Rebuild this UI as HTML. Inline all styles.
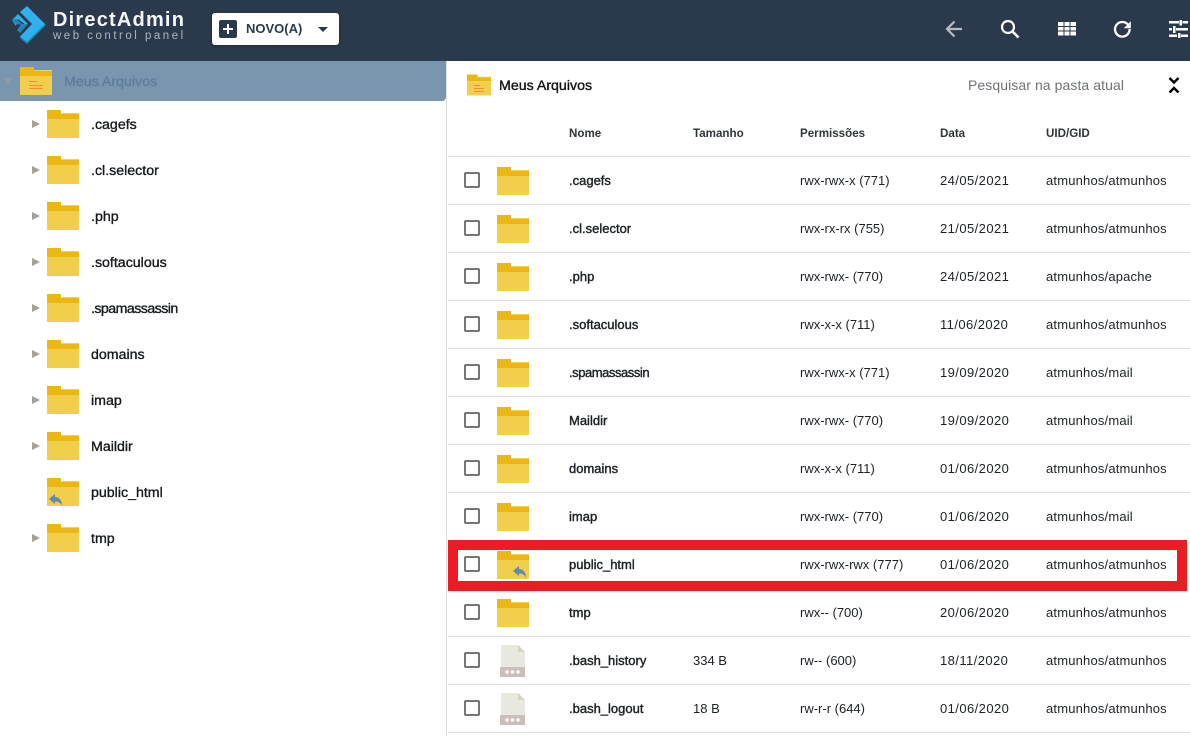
<!DOCTYPE html>
<html><head><meta charset="utf-8"><style>
html,body{margin:0;padding:0;background:#fff}
#p{position:relative;width:1190px;height:736px;overflow:hidden;font-family:"Liberation Sans",sans-serif;color:#1d2126;background:#fff}
#p div,#p svg,#p span{position:absolute}
.t{font-size:13px;line-height:16px;white-space:nowrap;margin-top:1px}
.dt{letter-spacing:.42px}
.u{letter-spacing:.18px}
.h{font-size:11.600px;line-height:16px;white-space:nowrap;font-weight:bold;color:#30353b;margin-top:.5px}
.n{font-size:13px;line-height:16px;white-space:nowrap;color:#1d2126;-webkit-text-stroke:.4px currentColor;margin-top:1px}
.tr{font-size:14.200px;line-height:16px;white-space:nowrap;color:#15181c;-webkit-text-stroke:.35px currentColor;margin-top:2px}
.ln{left:448px;width:742px;height:1px;background:#e0e0e0}
.cb{left:464px;width:12px;height:12px;border:2px solid #757575;border-radius:2px}
.ar{left:32px;width:0;height:0;border-left:8px solid #a8a09a;border-top:4.500px solid transparent;border-bottom:4.500px solid transparent;margin-top:1px}
.o{height:1.400px;background:#f0913a}
</style></head><body><div id="p">
<svg width="0" height="0" style="left:0;top:0"><defs>
<symbol id="f" viewBox="0 0 32 28"><path d="M0 0h14v4h18v5H0z" fill="#ecb613"/><path d="M14 3h18v1H14z" fill="#f3d15f"/><path d="M0 9h32v19H0z" fill="#f1cf4d"/></symbol>
<symbol id="r" viewBox="0 0 14 12"><path d="M6 0L0 5l6 5V7.500c3.500 0 5.500 1 7 4.500C13 6 10 3.200 6 3z" fill="#6488a8"/></symbol>
<symbol id="d" viewBox="0 0 26 34"><path d="M1 0h17l7 7v15H1z" fill="#e8e8df"/><path d="M18 0l7 7h-7z" fill="#d3d3c8"/><path d="M0 22h25v10H0z" fill="#c9c0bb"/><circle cx="7" cy="27" r="1.700" fill="#fff"/><circle cx="12.500" cy="27" r="1.700" fill="#fff"/><circle cx="18" cy="27" r="1.700" fill="#fff"/></symbol>
</defs></svg>

<div style="left:0;top:0;width:1190px;height:61px;background:#2a3a4c"></div>
<svg style="left:0;top:0" width="50" height="50" viewBox="0 0 50 50"><path d="M12 20l6-6 10 10-3.500 0-6.500-5-2 7z" fill="#2fb2ec"/><path d="M12 20l3.500 3.500 2.500 1h3l-4 5.500 3 3 8-9H22l-6-5.500z" fill="#1f86bd"/><path d="M27 6l18 18-18 18-7-5.500 12-12.500-12-12z" fill="#2fb2ec"/><path d="M20 36.500l7 5.500 18-18 1 1-19 19-7-6z" fill="#1f86bd"/></svg>
<div style="left:53px;top:8px;font-size:20px;line-height:24px;font-weight:bold;color:#f4f6f8;white-space:nowrap;letter-spacing:1.200px">DirectAdmin</div>
<div style="left:53px;top:29px;font-size:11.500px;line-height:14px;color:#aeb6be;white-space:nowrap;letter-spacing:2.500px">web control panel</div>
<div style="left:212px;top:13px;width:127px;height:32px;background:#fff;border-radius:3px;box-shadow:0 1px 3px rgba(0,0,0,.3)"></div>
<div style="left:219px;top:20px;width:18px;height:18px;background:#2a3a4c;border-radius:2px"></div>
<div style="left:223px;top:28px;width:10px;height:2px;background:#fff"></div>
<div style="left:227px;top:24px;width:2px;height:10px;background:#fff"></div>
<div style="left:246px;top:21px;font-size:13px;line-height:16px;font-weight:bold;color:#2a3a4c;white-space:nowrap">NOVO(A)</div>
<div style="left:318px;top:27px;border-top:5px solid #2a3a4c;border-left:5px solid transparent;border-right:5px solid transparent"></div>

<svg style="left:942px;top:17px" width="24" height="24" viewBox="0 0 24 24" fill="none" stroke="#b5bbc1" stroke-width="2.200"><path d="M20 12H6M12.500 4.500L5 12l7.500 7.500"/></svg>
<svg style="left:998px;top:17px" width="24" height="24" viewBox="0 0 24 24" fill="none" stroke="#fff" stroke-width="2.200"><circle cx="10" cy="10" r="6"/><path d="M14.500 14.500l6 6" stroke-width="2.600"/></svg>
<svg style="left:1058px;top:22px" width="18" height="14" viewBox="0 0 18 14" fill="#fff"><path d="M0 0h5.500v4H0zM6.500 0h5v4h-5zM12.500 0H18v4h-5.500zM0 5h5.500v3.500H0zM6.500 5h5v3.500h-5zM12.500 5H18v3.500h-5.500zM0 9.500h5.500V13.500H0zM6.500 9.500h5V13.500h-5zM12.500 9.500H18V13.500h-5.500z"/></svg>
<svg style="left:1110px;top:17px" width="24" height="24" viewBox="0 0 24 24" fill="none"><path d="M17.800 7.500A7.300 7.300 0 1 0 19.600 12" stroke="#fff" stroke-width="2.300"/><path d="M20.800 4.200v7h-7z" fill="#fff"/></svg>
<svg style="left:1168px;top:20px" width="22" height="20" viewBox="0 0 22 20" fill="#fff"><path d="M1 1h10v2.500H1zM14.500 1H20v2.500h-5.500zM11.500 0H14v5.500h-2.500zM1 8h3v2.500H1zM8 8h12v2.500H8zM5 6h2.500v7H5zM1 14.500h8V17H1zM13 14.500h7V17h-7zM10 13h2.500v5H10z"/></svg>

<div style="left:446px;top:61px;width:1px;height:675px;background:#e0e0e0"></div>
<div style="left:0;top:61px;width:446px;height:40px;background:#7a96ae;border-radius:0 0 4px 0"></div>
<div style="left:4px;top:78px;border-top:7px solid #8d9aa5;border-left:4.500px solid transparent;border-right:4.500px solid transparent"></div>
<svg style="left:20px;top:67px" width="32" height="28"><use href="#f"/></svg>
<div class="o" style="left:29px;top:81px;width:9px"></div><div class="o" style="left:29px;top:84.500px;width:14px"></div><div class="o" style="left:29px;top:88px;width:14px"></div>
<div class="tr" style="left:64px;top:72px;color:#5c7d9c">Meus Arquivos</div>

<div class="ar" style="top:119px"></div><svg style="left:47px;top:110px" width="32" height="28"><use href="#f"/></svg><div class="tr" style="left:91px;top:115px">.cagefs</div>
<div class="ar" style="top:165px"></div><svg style="left:47px;top:156px" width="32" height="28"><use href="#f"/></svg><div class="tr" style="left:91px;top:161px">.cl.selector</div>
<div class="ar" style="top:211px"></div><svg style="left:47px;top:202px" width="32" height="28"><use href="#f"/></svg><div class="tr" style="left:91px;top:207px">.php</div>
<div class="ar" style="top:257px"></div><svg style="left:47px;top:248px" width="32" height="28"><use href="#f"/></svg><div class="tr" style="left:91px;top:253px">.softaculous</div>
<div class="ar" style="top:303px"></div><svg style="left:47px;top:294px" width="32" height="28"><use href="#f"/></svg><div class="tr" style="left:91px;top:299px;letter-spacing:-.55px">.spamassassin</div>
<div class="ar" style="top:349px"></div><svg style="left:47px;top:340px" width="32" height="28"><use href="#f"/></svg><div class="tr" style="left:91px;top:345px">domains</div>
<div class="ar" style="top:395px"></div><svg style="left:47px;top:386px" width="32" height="28"><use href="#f"/></svg><div class="tr" style="left:91px;top:391px">imap</div>
<div class="ar" style="top:441px"></div><svg style="left:47px;top:432px" width="32" height="28"><use href="#f"/></svg><div class="tr" style="left:91px;top:437px">Maildir</div>
<svg style="left:47px;top:478px" width="32" height="28"><use href="#f"/></svg><svg style="left:49px;top:494px" width="14" height="12"><use href="#r"/></svg><div class="tr" style="left:91px;top:483px">public_html</div>
<div class="ar" style="top:533px"></div><svg style="left:47px;top:524px" width="32" height="28"><use href="#f"/></svg><div class="tr" style="left:91px;top:529px">tmp</div>

<svg style="left:467px;top:74px" width="24" height="22" viewBox="0 0 32 28"><use href="#f"/></svg>
<div class="o" style="left:474px;top:85px;width:6px"></div><div class="o" style="left:474px;top:88px;width:10px"></div><div class="o" style="left:474px;top:91px;width:10px"></div>
<div class="tr" style="left:499px;top:76px;color:#111">Meus Arquivos</div>
<div style="left:968px;top:77px;font-size:14px;line-height:16px;white-space:nowrap;color:#6f7378;letter-spacing:.08px">Pesquisar na pasta atual</div>
<svg style="left:1167px;top:76px" width="14" height="20" viewBox="0 0 14 20" fill="none" stroke="#000" stroke-width="2.400"><path d="M2.500 2l4.500 4.500L11.500 2M2.500 16.500l4.500-4.500 4.500 4.500"/></svg>

<div class="h" style="left:569px;top:125px">Nome</div>
<div class="h" style="left:693px;top:125px">Tamanho</div>
<div class="h" style="left:800px;top:125px">Permissões</div>
<div class="h" style="left:940px;top:125px">Data</div>
<div class="h" style="left:1046px;top:125px">UID/GID</div>

<div class="ln" style="top:156px"></div><div class="ln" style="top:204px"></div><div class="ln" style="top:252px"></div><div class="ln" style="top:300px"></div><div class="ln" style="top:348px"></div><div class="ln" style="top:396px"></div><div class="ln" style="top:444px"></div><div class="ln" style="top:492px"></div><div class="ln" style="top:636px"></div><div class="ln" style="top:684px"></div><div class="ln" style="top:732px"></div>

<div class="cb" style="top:172px"></div><svg style="left:497px;top:167px" width="32" height="28"><use href="#f"/></svg><div class="n" style="left:569px;top:172px">.cagefs</div><div class="t" style="left:800px;top:172px">rwx-rwx-x (771)</div><div class="t dt" style="left:940px;top:172px">24/05/2021</div><div class="t u" style="left:1046px;top:172px">atmunhos/atmunhos</div>
<div class="cb" style="top:220px"></div><svg style="left:497px;top:215px" width="32" height="28"><use href="#f"/></svg><div class="n" style="left:569px;top:220px">.cl.selector</div><div class="t" style="left:800px;top:220px">rwx-rx-rx (755)</div><div class="t dt" style="left:940px;top:220px">21/05/2021</div><div class="t u" style="left:1046px;top:220px">atmunhos/atmunhos</div>
<div class="cb" style="top:268px"></div><svg style="left:497px;top:263px" width="32" height="28"><use href="#f"/></svg><div class="n" style="left:569px;top:268px">.php</div><div class="t" style="left:800px;top:268px">rwx-rwx- (770)</div><div class="t dt" style="left:940px;top:268px">24/05/2021</div><div class="t u" style="left:1046px;top:268px">atmunhos/apache</div>
<div class="cb" style="top:316px"></div><svg style="left:497px;top:311px" width="32" height="28"><use href="#f"/></svg><div class="n" style="left:569px;top:316px">.softaculous</div><div class="t" style="left:800px;top:316px">rwx-x-x (711)</div><div class="t dt" style="left:940px;top:316px">11/06/2020</div><div class="t u" style="left:1046px;top:316px">atmunhos/atmunhos</div>
<div class="cb" style="top:364px"></div><svg style="left:497px;top:359px" width="32" height="28"><use href="#f"/></svg><div class="n" style="left:569px;top:364px;letter-spacing:-.45px">.spamassassin</div><div class="t" style="left:800px;top:364px">rwx-rwx-x (771)</div><div class="t dt" style="left:940px;top:364px">19/09/2020</div><div class="t u" style="left:1046px;top:364px">atmunhos/mail</div>
<div class="cb" style="top:412px"></div><svg style="left:497px;top:407px" width="32" height="28"><use href="#f"/></svg><div class="n" style="left:569px;top:412px">Maildir</div><div class="t" style="left:800px;top:412px">rwx-rwx- (770)</div><div class="t dt" style="left:940px;top:412px">19/09/2020</div><div class="t u" style="left:1046px;top:412px">atmunhos/mail</div>
<div class="cb" style="top:460px"></div><svg style="left:497px;top:455px" width="32" height="28"><use href="#f"/></svg><div class="n" style="left:569px;top:460px">domains</div><div class="t" style="left:800px;top:460px">rwx-x-x (711)</div><div class="t dt" style="left:940px;top:460px">01/06/2020</div><div class="t u" style="left:1046px;top:460px">atmunhos/atmunhos</div>
<div class="cb" style="top:508px"></div><svg style="left:497px;top:503px" width="32" height="28"><use href="#f"/></svg><div class="n" style="left:569px;top:508px">imap</div><div class="t" style="left:800px;top:508px">rwx-rwx- (770)</div><div class="t dt" style="left:940px;top:508px">01/06/2020</div><div class="t u" style="left:1046px;top:508px">atmunhos/mail</div>

<div style="left:448px;top:540px;width:719px;height:31px;border:10px solid #ed1c24"></div>
<div class="cb" style="top:556px"></div><svg style="left:497px;top:551px" width="32" height="28"><use href="#f"/></svg><svg style="left:513px;top:566px" width="14" height="12"><use href="#r"/></svg><div class="n" style="left:569px;top:556px">public_html</div><div class="t" style="left:800px;top:556px">rwx-rwx-rwx (777)</div><div class="t dt" style="left:940px;top:556px">01/06/2020</div><div class="t u" style="left:1046px;top:556px">atmunhos/atmunhos</div>

<div class="cb" style="top:604px"></div><svg style="left:497px;top:599px" width="32" height="28"><use href="#f"/></svg><div class="n" style="left:569px;top:604px">tmp</div><div class="t" style="left:800px;top:604px">rwx-- (700)</div><div class="t dt" style="left:940px;top:604px">20/06/2020</div><div class="t u" style="left:1046px;top:604px">atmunhos/atmunhos</div>
<div class="cb" style="top:652px"></div><svg style="left:500px;top:645px" width="26" height="34"><use href="#d"/></svg><div class="n" style="left:569px;top:652px">.bash_history</div><div class="t" style="left:693px;top:652px">334 B</div><div class="t" style="left:800px;top:652px">rw-- (600)</div><div class="t dt" style="left:940px;top:652px">18/11/2020</div><div class="t u" style="left:1046px;top:652px">atmunhos/atmunhos</div>
<div class="cb" style="top:700px"></div><svg style="left:500px;top:693px" width="26" height="34"><use href="#d"/></svg><div class="n" style="left:569px;top:700px">.bash_logout</div><div class="t" style="left:693px;top:700px">18 B</div><div class="t" style="left:800px;top:700px">rw-r-r (644)</div><div class="t dt" style="left:940px;top:700px">01/06/2020</div><div class="t u" style="left:1046px;top:700px">atmunhos/atmunhos</div>
</div></body></html>
